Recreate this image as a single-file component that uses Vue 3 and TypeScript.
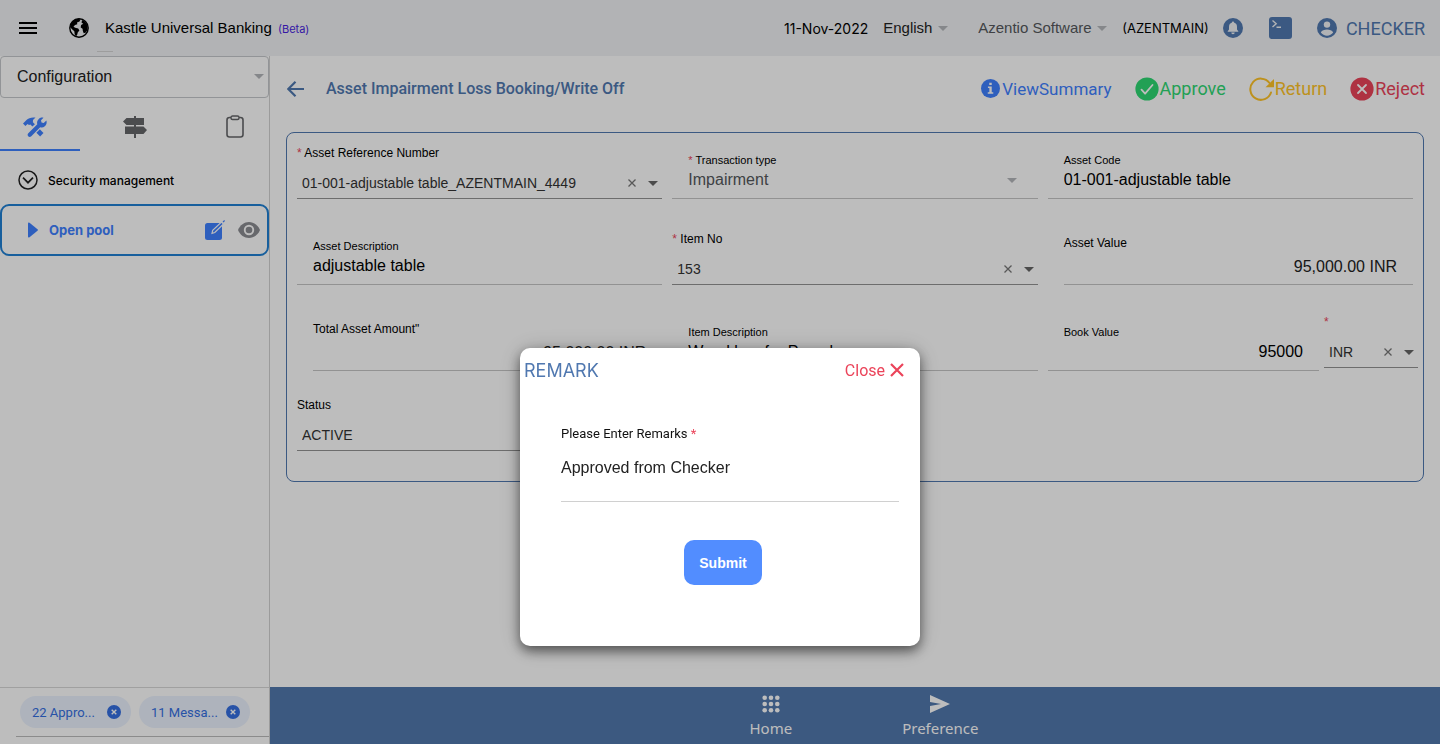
<script setup lang="ts">
import { ref } from 'vue'

const assetRef = ref('01-001-adjustable table_AZENTMAIN_4449')
const transactionType = ref('Impairment')
const assetCode = ref('01-001-adjustable table')
const assetDescription = ref('adjustable table')
const itemNo = ref('153')
const assetValue = ref('95,000.00 INR')
const totalAmount = ref('95,000.00 INR')
const itemDescription = ref('Wood box for Parcel')
const bookValue = ref('95000')
const currency = ref('INR')
const status = ref('ACTIVE')
const remarks = ref('Approved from Checker')
const chips: string[] = ['22 Appro...', '11 Messa...']
const open = ref(true)
</script>

<template>
  <div class="app">
    <header class="topbar">
      <button class="icon-btn menu" aria-label="Menu">
        <svg width="18" height="12" viewBox="0 0 18 12"><path d="M0 0h18v2H0zM0 5h18v2H0zM0 10h18v2H0z" fill="#000" /></svg>
      </button>
      <svg class="globe" width="20" height="20" viewBox="0 0 20 20">
        <circle cx="10" cy="10" r="9.2" fill="#f0f2f4" stroke="#000" stroke-width="1.4" />
        <path d="M2 5.5 5 2l4-1.200 2.500.7-1 2-2.500 1 .3 1.700-2.300.8-1.500 1.800 1.700 1 3 .7 1.200 2-1.700 1.900-.4 2.200L7 18.500l-1.300-2.300-.4-3-2-1.800L1 9z" fill="#000" />
        <path d="M13 2l3 1.500 2.700 4-.2 4.500-2 2.800-1.800.4-.9-2.400-.2-2-1.900-1.300.4-2.400 2.200-1.300-1.700-1z" fill="#000" />
      </svg>
      <h1 class="brand">Kastle Universal Banking <span>(Beta)</span></h1>
      <div class="top-right">
        <span class="date">11-Nov-2022</span>
        <div class="mini language">
          <select aria-label="Language"><option>English</option></select>
          <svg width="10" height="5" viewBox="0 0 10 5"><path d="M0 0h10L5 5z" fill="#b4b6ba" /></svg>
        </div>
        <div class="mini company">
          <select aria-label="Company"><option>Azentio Software</option></select>
          <svg width="10" height="5" viewBox="0 0 10 5"><path d="M0 0h10L5 5z" fill="#b4b6ba" /></svg>
        </div>
        <span class="branch">(AZENTMAIN)</span>
        <button class="icon-btn bell" aria-label="Notifications">
          <svg width="20" height="20" viewBox="0 0 20 20"><circle cx="10" cy="10" r="10" fill="#5078b0" /><path d="M10 3.500c.7 0 1 .4 1 1 2 .6 3 2.200 3 4.300v2.700l1.300 1.700v.6H4.700v-.6L6 11.500V8.800c0-2.100 1-3.700 3-4.300 0-.6.3-1 1-1zM8.300 14.600h3.400c0 1-.7 1.700-1.700 1.700s-1.700-.7-1.700-1.700z" fill="#f0f2f4" /></svg>
        </button>
        <button class="icon-btn term" aria-label="Terminal">
          <svg width="23" height="22" viewBox="0 0 23 22"><rect width="23" height="22" rx="3" fill="#5078b0" /><path d="M3.500 3.500 7.200 6.700 3.500 10M7.500 10.300h4.500" fill="none" stroke="#f0f2f4" stroke-width="1.400" /></svg>
        </button>
        <button class="user">
          <svg width="20" height="20" viewBox="0 0 20 20"><circle cx="10" cy="10" r="10" fill="#5078b0" /><circle cx="10" cy="6.600" r="3.200" fill="#f0f2f4" /><path d="M3.800 14.600c1-2.200 3.700-3 6.200-3s5.200.8 6.200 3c-1.500 2-3.700 3.100-6.200 3.100s-4.700-1.100-6.200-3.100z" fill="#f0f2f4" /></svg>
          CHECKER
        </button>
      </div>
    </header>

    <div class="body">
      <aside class="sidebar">
        <div class="module">
          <select aria-label="Module"><option>Configuration</option></select>
          <svg width="10" height="5" viewBox="0 0 10 5"><path d="M0 0h10L5 5z" fill="#b4b6ba" /></svg>
        </div>
        <nav class="tabs">
          <button class="active" aria-label="Setup">
            <svg width="24" height="20" viewBox="0 0 24 20">
              <path d="M0 6.500 3.500 3C5.500.8 9 0 12.500.6L10 3l-.1 2.200 2 2.100-2.500 2.300-2-2L6 8 4.600 7l-2.200 2z" fill="#3f80ff" />
              <path d="M20.500.8 18 3.300l.5 2.200 2.200.5L23.400 3.500c.7 2.500-.1 4.600-1.600 5.800-1.400 1.200-3 1.400-4.600.9L8.300 19.200c-1 .9-2.300.9-3.100 0-.8-.8-.8-2 .1-2.900l9-9c-.5-1.700-.2-3.500 1.100-4.900C16.700.9 18.600.2 20.500.8z" fill="#3f80ff" />
              <path d="M16.800 12.300l3.700 3.600-3.400 3.600-3.700-3.700z" fill="#3f80ff" />
            </svg>
          </button>
          <button aria-label="Directions">
            <svg width="24" height="22" viewBox="0 0 24 22"><path d="M11 0h2v2h8v7h-8v1.500h7.500L24 14l-3.500 4H13v4h-2v-4H2v-7.500h9V9H3.500L0 5.500 3.500 2H11z" fill="#66676a" /></svg>
          </button>
          <button aria-label="Clipboard">
            <svg width="18" height="23" viewBox="0 0 18 23"><rect x="1" y="2.500" width="16" height="19.500" rx="2.500" fill="none" stroke="#66676a" stroke-width="1.600" /><rect x="5" y="1" width="8" height="3.500" rx="1.500" fill="#fff" stroke="#66676a" stroke-width="1.400" /></svg>
          </button>
        </nav>
        <button class="group">
          <svg width="20" height="20" viewBox="0 0 20 20" fill="none" stroke="#222" stroke-width="1.500"><circle cx="10" cy="10" r="9" /><path d="M5 7.700l5 5 5-5" stroke-width="1.700" /></svg>
          Security management
        </button>
        <div class="task">
          <svg width="10" height="16" viewBox="0 0 10 16"><path d="M0 1.500Q0 0 1.500.8L9.500 7.300q.8.700 0 1.400L1.500 15.200Q0 16 0 14.500z" fill="#3f80ff" /></svg>
          <a href="#">Open pool</a>
          <button class="icon-btn edit" aria-label="Edit">
            <svg width="20" height="20" viewBox="0 0 20 20"><rect y="3" width="17" height="17" rx="2.500" fill="#3f80ff" /><path d="M7 13.300l.7-3L16.500 2l2 2-8.700 8.500z" fill="#3f80ff" stroke="#fff" stroke-width="1.200" /><path d="M17.600 1.700 19.200.1l.8.900-1.600 1.600z" fill="#3f80ff" /></svg>
          </button>
          <button class="icon-btn" aria-label="View">
            <svg width="22" height="16" viewBox="0 0 22 16"><path d="M0 8c2-5 6.300-8 11-8s9 3 11 8c-2 5-6.300 8-11 8S2 13 0 8z" fill="#8c8d92" /><circle cx="11" cy="8" r="5.200" fill="#fff" /><circle cx="11" cy="8" r="3.300" fill="#8c8d92" /></svg>
          </button>
        </div>
        <div class="chips">
          <div class="chip-row">
            <button v-for="chip in chips" :key="chip" class="chip">
              {{ chip }}
              <svg width="14" height="14" viewBox="0 0 14 14"><circle cx="7" cy="7" r="7" fill="#356fe2" /><path d="M4.700 4.700l4.600 4.600M9.300 4.700 4.700 9.300" stroke="#fff" stroke-width="1.400" /></svg>
            </button>
          </div>
        </div>
      </aside>

      <main class="main">
        <div class="titlebar">
          <button class="icon-btn back" aria-label="Back">
            <svg width="17" height="16" viewBox="0 0 17 16"><path d="M8.500.8 1.300 8l7.200 7.200M1.300 8H17" fill="none" stroke="#5078b0" stroke-width="2.200" /></svg>
          </button>
          <h2>Asset Impairment Loss Booking/Write Off</h2>
          <div class="actions">
            <button class="view">
              <svg width="19" height="19" viewBox="0 0 20 20"><circle cx="10" cy="10" r="10" fill="#3f80ff" /><path d="M8.700 4h2.600v2.300H8.700zM7.300 8h4v6h1.600v1.400H7.100V14h1.700V9.400H7.300z" fill="#fff" /></svg>
              ViewSummary
            </button>
            <button class="approve">
              <svg width="24" height="24" viewBox="0 0 24 24"><circle cx="12" cy="12" r="11.600" fill="#2fd873" /><path d="M6.500 12.700l3.600 4L17.500 8" fill="none" stroke="#fff" stroke-width="1.800" stroke-linecap="round" stroke-linejoin="round" /></svg>
              Approve
            </button>
            <button class="return">
              <svg width="25" height="24" viewBox="0 0 25 24"><path d="M22 15.500A10.600 10.600 0 1 1 20.500 6" fill="none" stroke="#ffc428" stroke-width="2" stroke-linecap="round" /><path d="M25 2v8.200h-8.500z" fill="#ffc428" /></svg>
              Return
            </button>
            <button class="reject">
              <svg width="24" height="24" viewBox="0 0 24 24"><circle cx="12" cy="12" r="11.600" fill="#eb445a" /><path d="M8 8l8 8M16 8l-8 8" stroke="#fff" stroke-width="1.800" stroke-linecap="round" /></svg>
              Reject
            </button>
          </div>
        </div>

        <form class="panel" @submit.prevent>
          <div class="field picker">
            <label for="ref"><i>*</i> Asset Reference Number</label>
            <div class="line">
              <select id="ref" v-model="assetRef"><option>{{ assetRef }}</option></select>
              <button type="button" class="icon-btn" aria-label="Clear reference"><svg width="8" height="8" viewBox="0 0 8 8"><path d="M.5.5l7 7M7.500.5l-7 7" stroke="#777" stroke-width="1.300" /></svg></button>
              <svg class="caret" width="10" height="5" viewBox="0 0 10 5"><path d="M0 0h10L5 5z" fill="#666" /></svg>
            </div>
          </div>
          <div class="field plain">
            <label for="type"><i>*</i> Transaction type</label>
            <div class="line">
              <select id="type" v-model="transactionType" class="grey"><option>Impairment</option></select>
              <svg width="10" height="5" viewBox="0 0 10 5"><path d="M0 0h10L5 5z" fill="#b4b6ba" /></svg>
            </div>
          </div>
          <div class="field plain">
            <label for="code">Asset Code</label>
            <div class="line"><input id="code" v-model="assetCode" /></div>
          </div>

          <div class="field plain">
            <label for="desc">Asset Description</label>
            <div class="line"><input id="desc" v-model="assetDescription" /></div>
          </div>
          <div class="field picker">
            <label for="item"><i>*</i> Item No</label>
            <div class="line">
              <select id="item" v-model="itemNo"><option>153</option></select>
              <button type="button" class="icon-btn" aria-label="Clear item"><svg width="8" height="8" viewBox="0 0 8 8"><path d="M.5.5l7 7M7.500.5l-7 7" stroke="#777" stroke-width="1.300" /></svg></button>
              <svg class="caret" width="10" height="5" viewBox="0 0 10 5"><path d="M0 0h10L5 5z" fill="#666" /></svg>
            </div>
          </div>
          <div class="field amount">
            <label for="value">Asset Value</label>
            <div class="line"><input id="value" v-model="assetValue" /></div>
          </div>

          <div class="field amount">
            <label for="total">Total Asset Amount"</label>
            <div class="line"><input id="total" v-model="totalAmount" /></div>
          </div>
          <div class="field plain">
            <label for="itemdesc">Item Description</label>
            <div class="line"><input id="itemdesc" v-model="itemDescription" /></div>
          </div>
          <div class="pair">
            <div class="field plain book">
              <label for="book">Book Value</label>
              <div class="line"><input id="book" v-model="bookValue" /></div>
            </div>
            <div class="field picker currency">
              <label for="cur"><i>*</i></label>
              <div class="line">
                <select id="cur" v-model="currency" aria-label="Currency"><option>INR</option></select>
                <button type="button" class="icon-btn" aria-label="Clear currency"><svg width="8" height="8" viewBox="0 0 8 8"><path d="M.5.5l7 7M7.500.5l-7 7" stroke="#777" stroke-width="1.300" /></svg></button>
                <svg class="caret" width="10" height="5" viewBox="0 0 10 5"><path d="M0 0h10L5 5z" fill="#666" /></svg>
              </div>
            </div>
          </div>

          <div class="field picker">
            <label for="status">Status</label>
            <div class="line"><select id="status" v-model="status"><option>ACTIVE</option></select></div>
          </div>
        </form>

        <footer class="bottom">
          <a href="#">
            <svg width="18" height="18" viewBox="0 0 18 18" fill="#fff"><g v-for="y in 3" :key="y"><circle v-for="x in 3" :key="x" :cx="x * 6.300 - 3.600" :cy="y * 6.300 - 3.600" r="2.300" /></g></svg>
            Home
          </a>
          <a href="#">
            <svg width="20" height="18" viewBox="0 0 20 18"><path d="M0 0l20 9L0 18v-7l11-2L0 7z" fill="#fff" /></svg>
            Preference
          </a>
        </footer>
      </main>
    </div>

    <div v-if="open" class="backdrop">
      <section class="dialog" role="dialog" aria-labelledby="dlg">
        <div class="dialog-head">
          <h3 id="dlg">REMARK</h3>
          <button class="close" @click="open = false">
            Close
            <svg width="14" height="14" viewBox="0 0 14 14"><path d="M1 1l12 12M13 1 1 13" stroke="#eb445a" stroke-width="2.200" /></svg>
          </button>
        </div>
        <label for="remarks">Please Enter Remarks <i>*</i></label>
        <input id="remarks" v-model="remarks" />
        <button class="submit">Submit</button>
      </section>
    </div>
  </div>
</template>

<style>
body { margin: 0; }
</style>

<style scoped>
* { box-sizing: border-box; }
.app { min-height: 100vh; display: flex; flex-direction: column; background: #fff; font-family: "Liberation Sans", Arial, sans-serif; color: #000; }
button, input, select { font: inherit; color: inherit; border: 0; background: none; padding: 0; margin: 0; outline: 0; }
select { appearance: none; min-width: 0; }
button { display: flex; align-items: center; }
svg { flex: none; display: block; }
i { font-style: normal; color: #eb445a; }
a { text-decoration: none; color: inherit; }
h1, h2, h3 { margin: 0; font-weight: 400; }

.topbar { height: 56px; display: flex; align-items: center; padding: 0 15px 0 19px; background: #f0f2f4; }
.globe { margin-left: 32px; }
.brand { position: relative; margin-left: 16px; font-size: 15px; line-height: 20px; }
.brand::after { content: ""; position: absolute; left: -8px; top: 33px; width: 16px; height: 1px; background: #d4d4d4; }
.brand span { margin-left: 2px; font: 11px Inter, sans-serif; color: #4a1fe0; }
.top-right { margin-left: auto; display: flex; align-items: center; }
.date { font: 14px Inter, sans-serif; }
.mini { display: flex; align-items: center; gap: 5px; font-size: 15px; line-height: 20px; color: #222; }
.language { margin-left: 15px; }
.company { margin-left: 30px; color: #55585c; }
.branch { margin-left: 15px; font: 13px Inter, sans-serif; }
.bell { margin-left: 14px; }
.term { margin-left: 26px; }
.user { margin-left: 25px; gap: 9px; font: 18px Roboto, sans-serif; color: #5078b0; }

.body { flex: 1; display: flex; }
.sidebar { width: 270px; flex: none; display: flex; flex-direction: column; border-right: 1px solid #d2d2d2; }
.module { display: flex; align-items: center; height: 42px; padding: 0 4px 1px 16px; border: 1px solid #c6c8cc; border-radius: 4px; font-size: 16px; line-height: 20px; color: #222; }
.module select { flex: 1; }
.tabs { display: grid; grid-template-columns: 80px 110px 1fr; height: 53px; }
.tabs button { justify-content: center; padding-top: 6px; border-bottom: 2px solid transparent; }
.tabs button:first-child { padding-right: 10px; }
.tabs button:last-child { padding-left: 11px; }
.tabs .active { border-color: #3f80ff; }
.group { height: 53px; padding: 5px 18px 0; gap: 10px; font: 500 12px Inter, sans-serif; }
.task { display: flex; align-items: center; height: 52px; padding: 0 7px 0 26px; border: 2px solid #2080d4; border-radius: 9px; color: #3f80ff; font: 700 13px Inter, sans-serif; }
.task a { flex: 1; margin-left: 11px; }
.edit { margin-right: 13px; }
.chips { margin-top: auto; height: 57px; border-top: 1px solid #d8d8d8; padding-left: 16px; }
.chip-row { display: flex; gap: 8px; height: 49px; padding: 8px 4px; border-bottom: 1px solid #bcbcbc; }
.chip { justify-content: space-between; width: 111px; height: 32px; padding: 0 10px 0 12px; border-radius: 16px; background: #ebf2fe; color: #356fe2; font: 13px Roboto, sans-serif; white-space: nowrap; }

.main { flex: 1; min-width: 0; display: flex; flex-direction: column; }
.titlebar { display: flex; align-items: center; height: 66px; padding: 0 15px 1px 17px; }
.titlebar h2 { margin-left: 22px; font: 16px Roboto, sans-serif; line-height: 20px; color: #5078b0; -webkit-text-stroke: 0; font-weight: 500; }
.actions { display: flex; align-items: center; gap: 23px; margin-left: auto; }
.actions button { gap: 1px; font: 18px Roboto, sans-serif; }
.actions .view { gap: 2px; font-size: 17px; color: #3f80ff; }
.approve { color: #2fd873; }
.return { color: #ffc428; }
.reject { color: #eb445a; }

.panel { display: grid; grid-template-columns: repeat(3, minmax(0, 1fr)); grid-template-rows: 58px 86px 86px 80px; column-gap: 10px; margin: 10px 16px 0; padding: 8px 10px 30px; border: 1px solid #5078b0; border-radius: 8px; }
.panel .field { display: flex; flex-direction: column; justify-content: flex-end; min-width: 0; }
.line { display: flex; align-items: center; border-bottom: 1px solid #c6c6c6; }
.line input, .line select { flex: 1; width: 0; height: 20px; line-height: 20px; }
.picker label { font-size: 12px; line-height: 16px; margin-bottom: 12px; }
.picker .line { padding: 0 4px 5px 5px; border-color: #949494; font-size: 14px; color: #333; }
.picker .caret { margin-left: 12px; }
.plain label { padding-left: 16px; margin-bottom: 3px; font-size: 11px; line-height: 14px; }
.plain .line { padding: 0 21px 8px 16px; font-size: 16px; }
.plain .grey { color: #55585c; }
.amount { padding-left: 16px; }
.amount label { font-size: 12px; line-height: 16px; margin-bottom: 6px; }
.amount .line { padding: 0 16px 7px 0; font-size: 16px; color: #222; }
.amount input { text-align: right; }
.pair { display: flex; gap: 5px; margin-right: -5px; }
.book { flex: 1; }
.book .line { padding-right: 16px; }
.book input { text-align: right; }
.currency { width: 94px; padding-bottom: 3px; }

.bottom { display: flex; justify-content: center; gap: 110px; height: 57px; margin-top: auto; padding: 8px 0 0 18px; background: #5178ad; color: #fff; font: 15px "Noto Sans", sans-serif; }
.bottom a { display: flex; flex-direction: column; align-items: center; gap: 5px; line-height: 20px; }

.backdrop { position: fixed; inset: 0; display: flex; justify-content: center; align-items: flex-start; padding-top: 348px; background: rgba(0, 0, 0, 0.26); }
.dialog { display: flex; flex-direction: column; width: 400px; padding: 8px 21px 61px 41px; border-radius: 10px; background: #fff; box-shadow: 0 5px 12px rgba(0, 0, 0, 0.5), 0 2px 24px rgba(0, 0, 0, 0.2); }
.dialog-head { display: flex; align-items: center; justify-content: space-between; height: 28px; margin: 0 -5px 0 -37px; }
.dialog h3 { font: 18px Inter, sans-serif; color: #5078b0; }
.close { gap: 5px; color: #eb445a; font: 16px Roboto, sans-serif; }
.dialog label { margin-top: 42px; font: 13px Roboto, sans-serif; line-height: 16px; color: #111; }
.dialog input { height: 52px; margin-top: 8px; padding-bottom: 16px; border-bottom: 1px solid #d0d0d0; color: #222; font-size: 16px; }
.submit { align-self: center; justify-content: center; width: 78px; height: 45px; margin: 38px 14px 0 0; border-radius: 10px; background: #528dff; color: #fff; font: 700 14px "Liberation Sans", sans-serif; }
</style>
